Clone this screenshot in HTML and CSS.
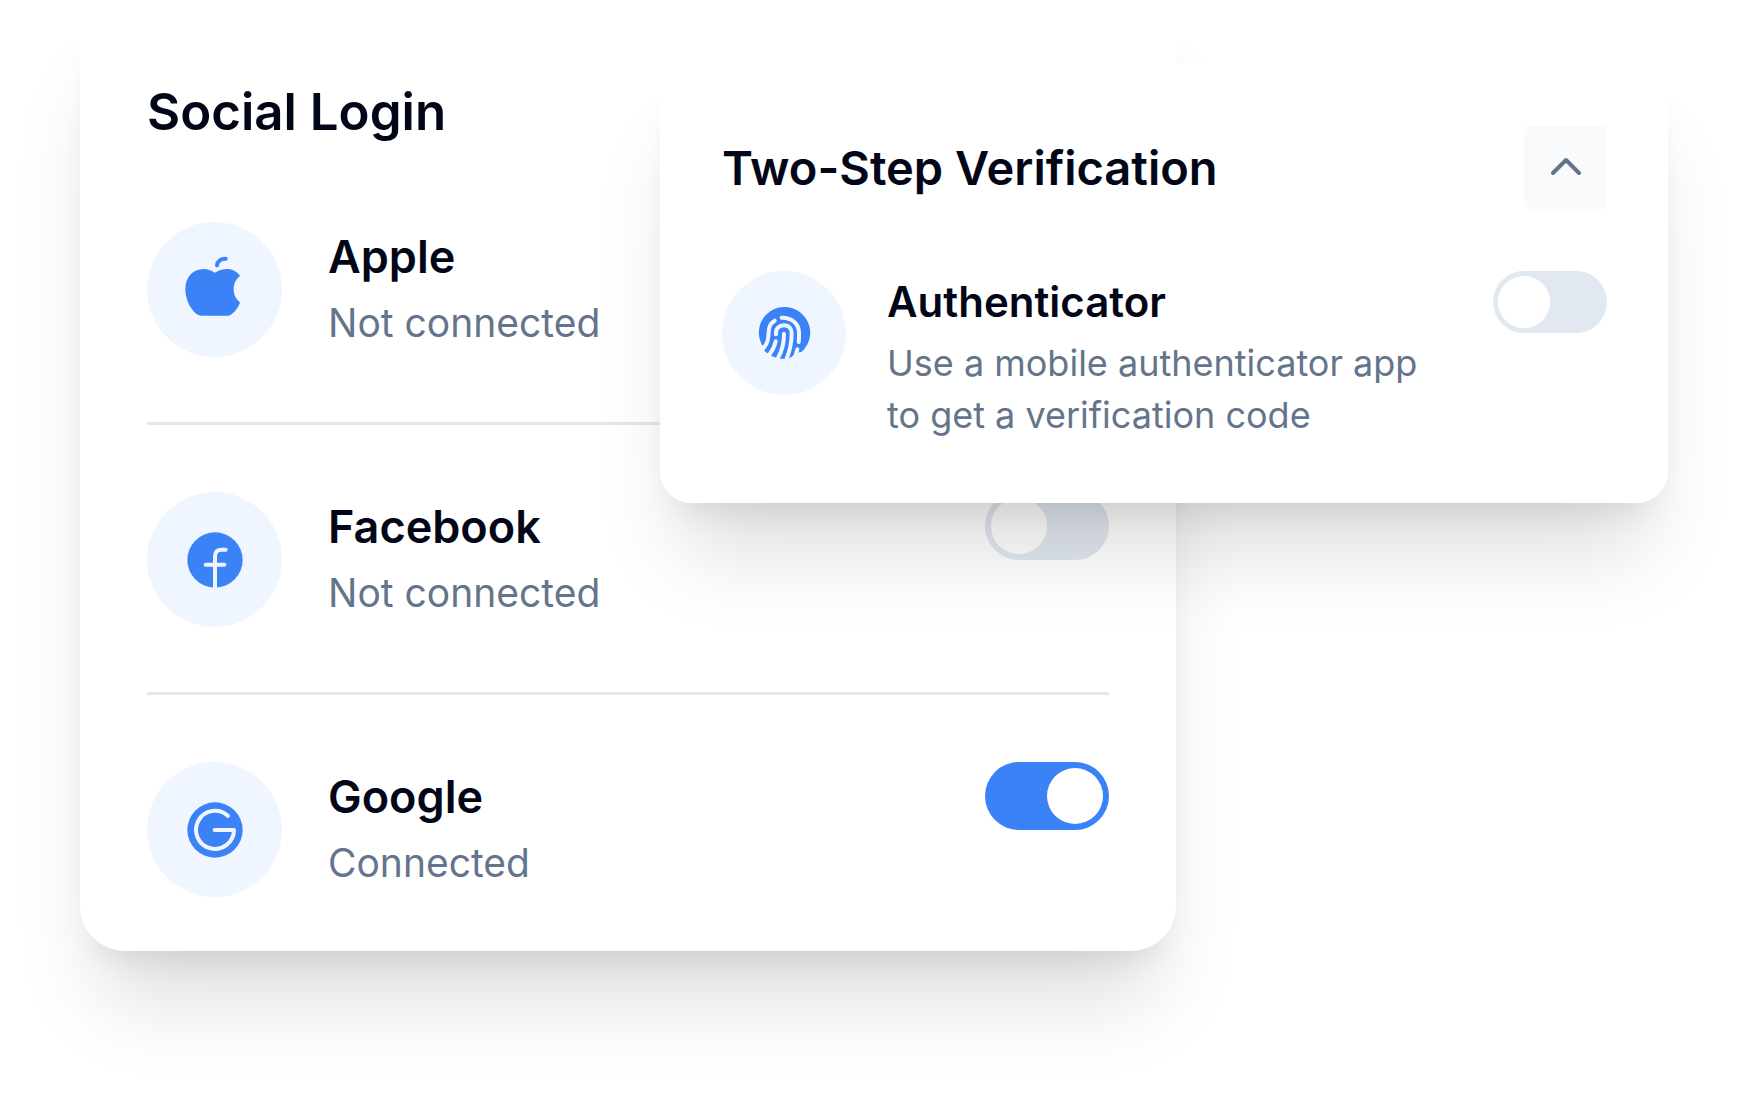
FILE: index.html
```html
<!DOCTYPE html>
<html lang="en">
<head>
<meta charset="utf-8">
<meta name="viewport" content="width=device-width, initial-scale=1">
<title>Account settings</title>
<link rel="stylesheet" href="styles.css">
</head>
<body>
<main class="stage">
  <section class="card social" aria-labelledby="social-title">
    <h2 class="card-title" id="social-title">Social Login</h2>
    <ul class="list">
      <li class="row">
        <span class="badge">
          <svg class="icon" viewBox="0 0 204 204" aria-hidden="true">
            <path class="fill" d="M102 50C92 44 80 39 67 39C36 39 13 64 13 99C13 131 31 168 54 178Q57 179 61 179H140Q146 179 150 176C162 168 173 153 177 139C164 129 158 115 158 99C158 83 165 69 177 60C168 46 153 39 139 39C125 39 112 44 102 50Z"/>
            <path class="stem" d="M108 28C109 16 119 8 134 8"/>
          </svg>
        </span>
        <label class="text" for="apple"><span class="name">Apple</span><span class="note">Not connected</span></label>
        <input class="switch" type="checkbox" id="apple">
      </li>
      <li class="row">
        <span class="badge">
          <svg class="icon" viewBox="0 0 204 204" aria-hidden="true">
            <circle class="fill" cx="102" cy="102" r="83"/>
            <path class="line" d="M102 188V90C102 78 110 71 122 71H134M74 116H130"/>
          </svg>
        </span>
        <label class="text" for="facebook"><span class="name">Facebook</span><span class="note">Not connected</span></label>
        <input class="switch" type="checkbox" id="facebook">
      </li>
      <li class="row">
        <span class="badge">
          <svg class="icon" viewBox="0 0 204 204" aria-hidden="true">
            <circle class="fill" cx="102" cy="102" r="83"/>
            <path class="line" d="M141 60A57 57 0 1 0 159 102H101"/>
          </svg>
        </span>
        <label class="text" for="google"><span class="name">Google</span><span class="note">Connected</span></label>
        <input class="switch" type="checkbox" id="google" checked>
      </li>
    </ul>
  </section>

  <section class="card two-step" aria-labelledby="two-step-title">
    <header class="card-head">
      <h2 class="card-title" id="two-step-title">Two-Step Verification</h2>
      <button class="collapse" type="button" aria-label="Collapse">
        <svg class="chevron" viewBox="0 0 30 22" aria-hidden="true"><path d="M2 16L15 3L28 16"/></svg>
      </button>
    </header>
    <div class="row">
      <span class="badge">
        <svg class="icon" viewBox="0 0 186 186" aria-hidden="true">
          <path class="fill" d="M29 132A77 77 0 1 1 145 150L139 151L106 170L81 170L57 163L35 148Z"/>
          <path class="line" d="M65 56C40 70 50 100 43 119C40 128 34 136 26 145"/>
          <path class="line" d="M86 47C116 46 138 66 138 92C138 105 138 115 137 120"/>
          <path class="line" d="M69 97C68 78 79 70 93 70C108 70 116 80 116 94C116 126 110 148 101 170"/>
          <path class="line" d="M93 95C93 124 89 143 76 166"/>
          <path class="line" d="M68 118C65 133 59 145 49 158"/>
          <path class="line" d="M133 142C131 153 127 163 122 171"/>
        </svg>
      </span>
      <label class="text" for="authenticator"><span class="name">Authenticator</span><span class="note">Use a mobile authenticator app<br>to get a verification code</span></label>
      <input class="switch" type="checkbox" id="authenticator">
    </div>
  </section>
</main>
</body>
</html>
```
FILE: styles.css
```css
* {
  box-sizing: border-box;
}

body {
  margin: 0;
  background: #fff;
  color: #020617;
  font-family: Inter, "Liberation Sans", sans-serif;
}

.stage {
  display: grid;
  grid-template-columns: 580fr 516fr 492fr;
  align-items: start;
  padding: 4px 80px 160px;
}

.card {
  grid-row: 1;
  background: #fff;
  box-shadow:
    0 68px 88px -22px rgba(0, 0, 0, 0.14),
    0 22px 32px -16px rgba(0, 0, 0, 0.09);
}

.social {
  grid-column: 1 / 3;
  padding: 68px 67px 54px;
  border-radius: 45px;
}

.two-step {
  grid-column: 2 / 4;
  margin-top: 60px;
  padding: 62px 61px 62px 62px;
  border-radius: 31px;
}

.card-title {
  margin: 0;
  font-size: 51px;
  line-height: 80px;
  font-weight: 600;
}

.card-head {
  display: flex;
  align-items: center;
  justify-content: space-between;
  margin-bottom: 62px;
}

.list {
  margin: 0;
  padding: 0;
  list-style: none;
}

.row {
  display: flex;
  align-items: flex-start;
}

.social .row {
  padding: 67px 0 65px;
  border-bottom: 3px solid #e2e8f0;
}

.social .row:first-child {
  padding-top: 70px;
}

.social .row:last-child {
  padding-bottom: 0;
  border-bottom: 0;
}

.badge {
  display: flex;
  flex: none;
  align-items: center;
  justify-content: center;
  width: 135px;
  height: 135px;
  border-radius: 50%;
  background: #eff6ff;
}

.icon {
  width: 68px;
  height: 68px;
}

.fill {
  fill: #3b82f6;
}

.line,
.stem {
  fill: none;
  stroke: #eff6ff;
  stroke-width: 12;
  stroke-linecap: round;
  stroke-linejoin: round;
}

.stem {
  stroke: #3b82f6;
}

.text {
  display: flex;
  flex: 1;
  flex-direction: column;
  gap: 4px;
  margin-left: 46px;
}

.name {
  font-size: 45px;
  line-height: 68px;
  font-weight: 600;
}

.note {
  color: #64748b;
  font-size: 39px;
  line-height: 56px;
}

.social .text {
  padding-top: 1px;
}

.switch {
  flex: none;
  display: flex;
  align-items: center;
  width: 124px;
  height: 68px;
  margin: 0;
  padding: 0 6px;
  border-radius: 34px;
  background: #e2e8f0;
  appearance: none;
}

.switch::before {
  content: "";
  width: 56px;
  height: 56px;
  border-radius: 50%;
  background: #fff;
}

.switch:checked {
  justify-content: flex-end;
  background: #3b82f6;
}

.two-step .card-title {
  font-size: 47px;
}

.two-step .badge {
  width: 124px;
  height: 124px;
}

.two-step .icon {
  width: 62px;
  height: 62px;
}

.two-step .text {
  margin-left: 41px;
}

.two-step .name {
  font-size: 42px;
  line-height: 62px;
}

.two-step .note {
  font-size: 36px;
  line-height: 52px;
}

.two-step .switch {
  width: 114px;
  height: 62px;
  padding: 0 5px;
}

.two-step .switch::before {
  width: 52px;
  height: 52px;
}

.collapse {
  display: flex;
  align-items: center;
  justify-content: center;
  width: 83px;
  height: 83px;
  padding: 0;
  border: 0;
  border-radius: 6px;
  background: #f8fafc;
}

.chevron {
  width: 30px;
  height: 22px;
  fill: none;
  stroke: #64748b;
  stroke-width: 4;
  stroke-linecap: round;
  stroke-linejoin: round;
}
```
